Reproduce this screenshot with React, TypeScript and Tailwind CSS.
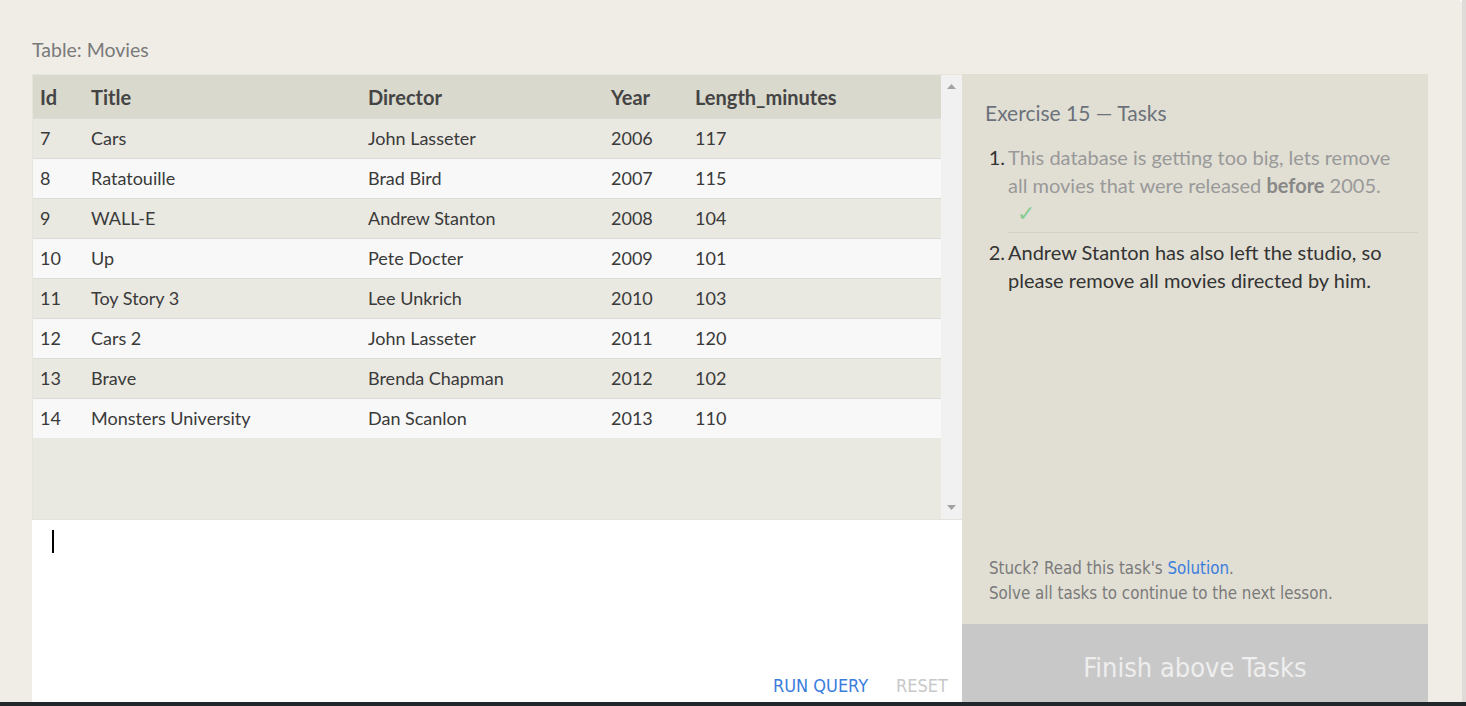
import React from 'react';

type Movie = {
  id: number;
  title: string;
  director: string;
  year: number;
  length: number;
};

const MOVIES: Movie[] = [
  { id: 7, title: 'Cars', director: 'John Lasseter', year: 2006, length: 117 },
  { id: 8, title: 'Ratatouille', director: 'Brad Bird', year: 2007, length: 115 },
  { id: 9, title: 'WALL-E', director: 'Andrew Stanton', year: 2008, length: 104 },
  { id: 10, title: 'Up', director: 'Pete Docter', year: 2009, length: 101 },
  { id: 11, title: 'Toy Story 3', director: 'Lee Unkrich', year: 2010, length: 103 },
  { id: 12, title: 'Cars 2', director: 'John Lasseter', year: 2011, length: 120 },
  { id: 13, title: 'Brave', director: 'Brenda Chapman', year: 2012, length: 102 },
  { id: 14, title: 'Monsters University', director: 'Dan Scanlon', year: 2013, length: 110 },
];

const COLS = 'grid grid-cols-[51px_277px_243px_84px_1fr]';
const BODY_FONT = { fontFamily: 'Lato, "Noto Sans", sans-serif' };
const NARROW_FONT = { fontFamily: '"Liberation Sans Narrow", "DejaVu Sans Condensed", sans-serif' };

const ScrollArrow: React.FC<{ up?: boolean }> = ({ up }) => (
  <svg width="9" height="5" viewBox="0 0 9 5" className="fill-[#a3a3a3]">
    {up ? <polygon points="0,5 9,5 4.5,0" /> : <polygon points="0,0 9,0 4.5,5" />}
  </svg>
);

const MovieTable: React.FC = () => (
  <div className="flex h-[445px] border-l border-t border-[#e6e4dc] bg-[#e9e8e1]">
    <div className="flex-1 text-[18px] text-[#3a3a3a]">
      <div className={`${COLS} h-[43px] items-center bg-[#dad9cd] text-[20px] font-bold text-[#444]`}>
        <div className="pl-[7px]">Id</div>
        <div className="pl-[7px]">Title</div>
        <div className="pl-[7px]">Director</div>
        <div className="pl-[7px]">Year</div>
        <div className="pl-[7px]">Length_minutes</div>
      </div>
      {MOVIES.map((m, i) => (
        <div
          key={m.id}
          className={`${COLS} h-[40px] items-center border-t border-[#dcdcd6] pb-[1px] ${
            i % 2 === 0 ? 'bg-[#e9e8e1]' : 'bg-[#f8f8f8]'
          }`}
        >
          <div className="pl-[7px]">{m.id}</div>
          <div className="pl-[7px]">{m.title}</div>
          <div className="pl-[7px]">{m.director}</div>
          <div className="pl-[7px]">{m.year}</div>
          <div className="pl-[7px]">{m.length}</div>
        </div>
      ))}
    </div>
    {/* scrollbar */}
    <div className="flex w-[21px] flex-col items-center justify-between bg-[#f1f1f1] py-[9px]">
      <ScrollArrow up />
      <ScrollArrow />
    </div>
  </div>
);

const QueryEditor: React.FC = () => (
  <div className="relative flex-1 border-t border-[#e4e2dc] bg-white">
    <div className="absolute left-[20px] top-[10px] h-[23px] w-[2px] bg-black" />
    <div className="absolute bottom-[3px] right-[14px] flex gap-[28px] text-[18px]" style={NARROW_FONT}>
      <span className="text-[#3b7ddd]">RUN QUERY</span>
      <span className="text-[#c8c8c8]">RESET</span>
    </div>
  </div>
);

const TaskPanel: React.FC = () => (
  <div className="flex w-[466px] flex-col">
    <div className="flex flex-1 flex-col bg-[#e1dfd4] pl-[23px] pr-[10px] pt-[25px]">
      <h3 className="text-[21px] leading-[28px] text-[#6c727a]">Exercise 15 — Tasks</h3>
      <ol className="mt-[16px] text-[20px] leading-[28px]">
        <li className="flex">
          <span className="w-[20px] shrink-0 text-right text-[#333]">1.</span>
          <div className="ml-[3px] flex-1 border-b border-[#d4d2c6] pb-[5px]">
            <p className="pr-[8px] text-[#999]">
              This database is getting too big, lets remove all movies that were released{' '}
              <b className="text-[#888]">before</b> 2005.
            </p>
            <div className="pl-[9px] text-[22px] leading-[28px] text-[#86cc93]">✓</div>
          </div>
        </li>
        <li className="mt-[5px] flex text-[#333]">
          <span className="w-[20px] shrink-0 text-right">2.</span>
          <p className="ml-[3px] flex-1 pr-[8px]">
            Andrew Stanton has also left the studio, so please remove all movies directed by him.
          </p>
        </li>
      </ol>
      <div className="mt-auto mb-[18px] pl-[4px] text-[16.8px] leading-[25px] text-[#7a7a7a]" style={NARROW_FONT}>
        <p>
          Stuck? Read this task's <span className="text-[#3b7ddd]">Solution</span>.
        </p>
        <p>Solve all tasks to continue to the next lesson.</p>
      </div>
    </div>
    <div
      className="flex h-[78px] items-center justify-center bg-[#c8c8c8] pt-[10px] text-[27px] text-[#eeeeee]"
      style={NARROW_FONT}
    >
      Finish above Tasks
    </div>
  </div>
);

export default function App() {
  return (
    <div className="flex h-[706px] w-full flex-col overflow-hidden" style={BODY_FONT}>
      <div className="flex min-h-0 flex-1">
        <main className="flex min-w-0 flex-1 flex-col rounded-tr-[4px] bg-[#efede6] pl-[32px] pr-[34px] pt-[38px]">
          <div className="text-[19.5px] leading-[24px] text-[#7a7a7a]">Table: Movies</div>
          <div className="mt-[12px] flex min-h-0 flex-1">
            <div className="flex w-[930px] flex-col">
              <MovieTable />
              <QueryEditor />
            </div>
            <TaskPanel />
          </div>
        </main>
        <div className="w-[4px] bg-[#dfdbd8]" />
      </div>
      <div className="h-[4px] bg-[#22272b]" />
    </div>
  );
}
